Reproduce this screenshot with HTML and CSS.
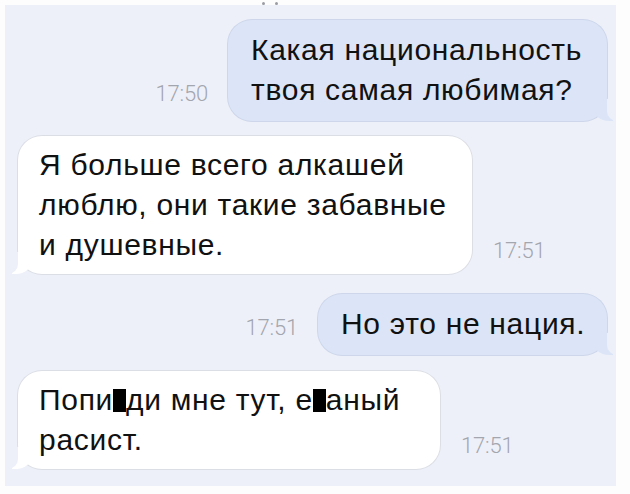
FILE: index.html
```html
<!DOCTYPE html>
<html lang="ru">
<head>
<meta charset="UTF-8">
<meta name="viewport" content="width=device-width, initial-scale=1.0">
<title>Чат</title>
<link rel="stylesheet" href="styles.css">
</head>
<body>

    <div class="cut-top">
        <span class="dot"></span>
        <span class="dot"></span>
    </div>

    <div id="chat">
        <div class="row out first">
            <span class="time">17:50</span>
            <div class="bubble out b1">Какая национальность<br>твоя самая любимая?</div>
        </div>

        <div class="row in second">
            <div class="bubble in b2">Я больше всего алкашей<br>люблю, они такие забавные<br>и душевные.</div>
            <span class="time">17:51</span>
        </div>

        <div class="row out third">
            <span class="time">17:51</span>
            <div class="bubble out b3">Но это не нация.</div>
        </div>

        <div class="row in fourth">
            <div class="bubble in b4">Попи<span class="censor"></span>ди мне тут, е<span class="censor"></span>аный<br>расист.</div>
            <span class="time">17:51</span>
        </div>
    </div>

</body>
</html>
```

FILE: styles.css
```css
  body {
      margin: 0;
      padding: 0 14px 0 5px;
      background: #fdfdfe;
      font-family: "Liberation Sans", Arial, sans-serif;
  }

  .cut-top {
      height: 5px;
      display: flex;
      gap: 10px;
      padding-left: 257px;
      align-items: flex-end;
  }

  .dot {
      width: 3px;
      height: 3px;
      border-radius: 50%;
      background: #9a9ca4;
  }

  #chat {
      background: #eef0f9;
      height: 481px;
      padding: 15px 9px 0 13px;
      box-sizing: border-box;
      overflow: hidden;
  }

  .row {
      display: flex;
      align-items: flex-end;
  }

  .row.out {
      justify-content: flex-end;
  }

  .row.second { margin-top: 15px; }
  .row.third { margin-top: 20px; }
  .row.fourth { margin-top: 16px; }

  .bubble {
      position: relative;
      box-sizing: border-box;
      font-size: 30px;
      line-height: 40px;
      letter-spacing: 0.7px;
      color: #111111;
      border-radius: 24px;
      white-space: nowrap;
  }

  .bubble.out {
      background: #dbe5f7;
      box-shadow: 0 0 0 1px #cdd6ea;
      padding: 10px 18px 11px 23px;
  }

  .bubble.in {
      background: #ffffff;
      box-shadow: 0 0 0 1px #dcdee6;
      padding: 9px 18px 9px 21px;
  }

  .b1 { width: 379px; }
  .b2 { width: 454px; }
  .b3 { width: 289px; padding-top: 11px; padding-bottom: 11px; }
  .b4 { width: 422px; }

  /* tails */
  .bubble.out::before,
  .bubble.in::before {
      content: "";
      position: absolute;
      bottom: 0;
      width: 20px;
      height: 22px;
  }

  .bubble.out::before {
      right: -6px;
      background: #dbe5f7;
      border-bottom-left-radius: 16px 14px;
  }

  .bubble.in::before {
      left: -6px;
      background: #ffffff;
      border-bottom-right-radius: 16px 14px;
  }

  .bubble.out::after,
  .bubble.in::after {
      content: "";
      position: absolute;
      bottom: 0;
      width: 10px;
      height: 22px;
      background: #eef0f9;
  }

  .bubble.out::after {
      right: -10px;
      border-bottom-left-radius: 10px;
  }

  .bubble.in::after {
      left: -10px;
      border-bottom-right-radius: 10px;
  }

  .time {
      font-family: Roboto, "Liberation Sans", sans-serif;
      font-weight: 300;
      font-size: 22px;
      color: #a3a6ae;
      letter-spacing: -0.2px;
  }

  .row.out .time {
      margin-right: 20px;
      margin-bottom: 15px;
  }

  .row.in .time {
      margin-left: 21px;
      margin-bottom: 11px;
  }

  .censor {
      display: inline-block;
      width: 13px;
      height: 23px;
      background: #000;
      vertical-align: -2px;
  }
```
